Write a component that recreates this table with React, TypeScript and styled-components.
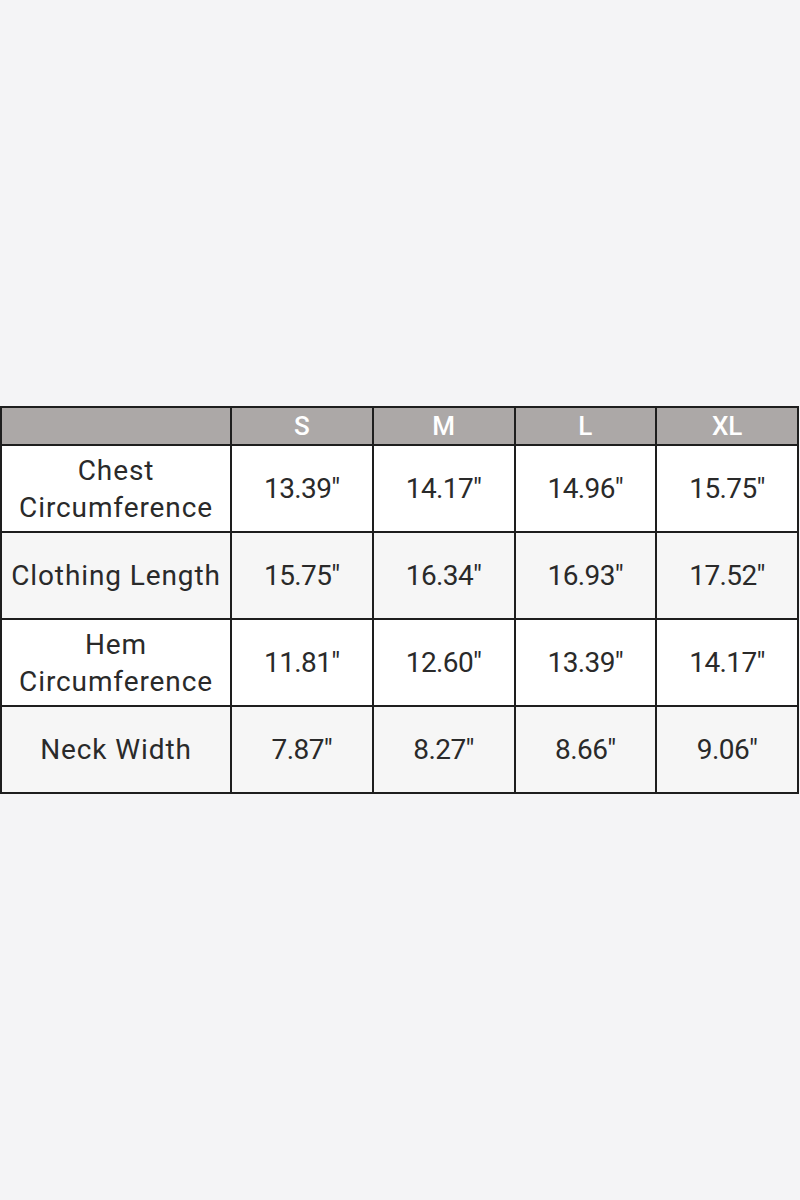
import React from 'react';
import styled, {createGlobalStyle} from 'styled-components';

const GlobalStyle = createGlobalStyle`
  html, body {
    margin: 0;
    padding: 0;
    background: #f4f4f6;
  }
`;

const Page = styled.div`
  height: 1200px;
  display: flex;
  align-items: center;
  font-family: Roboto, 'Liberation Sans', sans-serif;
`;

const Table = styled.table`
  width: 799px;
  border-collapse: collapse;
  table-layout: fixed;
  border: 2px solid #1e1e1e;
`;

const HeadCell = styled.th`
  background: #aca8a7;
  color: #ffffff;
  font-weight: 500;
  font-size: 26px;
  height: 36px;
  padding: 0;
  border: 2px solid #1e1e1e;
  line-height: 34px;
`;

const Row = styled.tr<{$shaded: boolean}>`
  background: ${p => (p.$shaded ? '#f6f6f6' : '#ffffff')};
`;

const Cell = styled.td<{$label?: boolean}>`
  height: 85px;
  padding: 0;
  border: 2px solid #1e1e1e;
  text-align: center;
  color: #2a2a2a;
  font-size: 28px;
  font-weight: 400;
  line-height: 37px;
  letter-spacing: ${p => (p.$label ? '0.9px' : '-0.6px')};
`;

const sizes = ['S', 'M', 'L', 'XL'];

const rows: {label: React.ReactNode; values: string[]}[] = [
  {label: <>Chest<br />Circumference</>, values: ['13.39"', '14.17"', '14.96"', '15.75"']},
  {label: 'Clothing Length', values: ['15.75"', '16.34"', '16.93"', '17.52"']},
  {label: <>Hem<br />Circumference</>, values: ['11.81"', '12.60"', '13.39"', '14.17"']},
  {label: 'Neck Width', values: ['7.87"', '8.27"', '8.66"', '9.06"']},
];

const App: React.FC = () => {
  return (
    <>
      <GlobalStyle />
      <Page>
        <Table>
          <colgroup>
            <col style={{width: 230}} />
            <col />
            <col />
            <col />
            <col />
          </colgroup>
          <thead>
            <tr>
              <HeadCell />
              {sizes.map(s => (
                <HeadCell key={s}>{s}</HeadCell>
              ))}
            </tr>
          </thead>
          <tbody>
            {rows.map((r, i) => (
              <Row key={i} $shaded={i % 2 === 1}>
                <Cell $label>{r.label}</Cell>
                {r.values.map((v, j) => (
                  <Cell key={j}>{v}</Cell>
                ))}
              </Row>
            ))}
          </tbody>
        </Table>
      </Page>
    </>
  );
};

export default App;
